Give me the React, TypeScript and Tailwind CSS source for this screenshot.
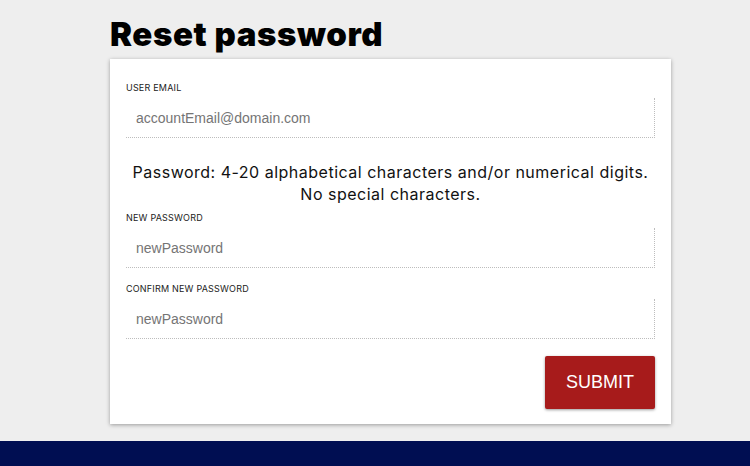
import React from "react";

const Field = ({ label, placeholder, mt }: { label: string; placeholder: string; mt: string }) => (
  <div className={mt}>
    <div className="text-[9px] leading-[12px] tracking-[0.2px] text-[#222] uppercase" style={{ fontFamily: "Inter, sans-serif" }}>{label}</div>
    <input
      type="text"
      placeholder={placeholder}
      className="mt-[4px] block w-full h-[40px] pl-[10px] border-0 border-b border-r border-dotted border-[#bdbdbd] outline-none bg-white text-[14px] placeholder:text-[#757575]"
      style={{ fontFamily: '"Liberation Sans", Arial, sans-serif' }}
    />
  </div>
);

export default function App() {
  return (
    <div className="min-h-[466px] bg-[#eeeeee] flex flex-col overflow-hidden">
      <div className="ml-[110px] w-[561px]">
        <h1
          className="mt-[14px] text-[33px] leading-[40px] font-black text-black tracking-[0.6px]"
          style={{ fontFamily: "Inter, sans-serif" }}
        >
          Reset password
        </h1>
        <div className="mt-[5px] bg-white shadow-[0_1px_4px_rgba(0,0,0,0.35)] px-[16px] pt-[23px] pb-[15px]">
          <Field label="User Email" placeholder="accountEmail@domain.com" mt="" />
          <p
            className="mt-[23px] text-center text-[16px] leading-[22px] tracking-[0.5px] text-[#111]"
            style={{ fontFamily: "Inter, sans-serif" }}
          >
            Password: 4-20 alphabetical characters and/or numerical digits.
            <br />
            No special characters.
          </p>
          <Field label="New Password" placeholder="newPassword" mt="mt-[7px]" />
          <Field label="Confirm New Password" placeholder="newPassword" mt="mt-[15px]" />
          <div className="mt-[17px] flex justify-end">
            <button
              className="w-[110px] h-[53px] bg-[#a71b1b] text-white text-[18px] rounded-[2px] shadow-[0_1px_3px_rgba(0,0,0,0.4)]"
              style={{ fontFamily: '"Liberation Sans", Arial, sans-serif' }}
            >
              SUBMIT
            </button>
          </div>
        </div>
      </div>
      <div className="mt-[17px] h-[60px] bg-[#000e52]" />
    </div>
  );
}
